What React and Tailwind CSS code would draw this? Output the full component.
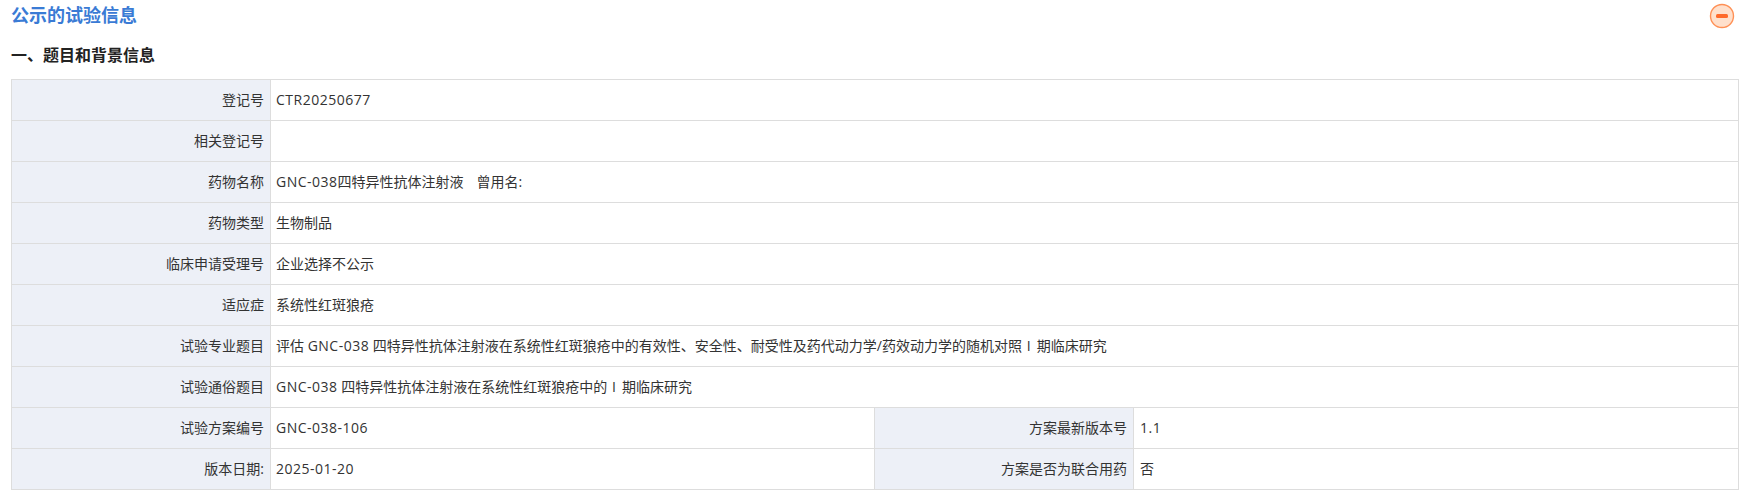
// # 公示的试验信息 #
const Label = ({ children }) => (
    <td className="border border-[#dddddd] bg-[#edf0f7] px-[6px] pb-[2px] text-right align-middle text-[14px] text-[#333333]">
        {children}
    </td>
);

const Value = ({ children, colSpan, right }) => (
    <td colSpan={colSpan} className={`border border-[#dddddd] bg-white pr-[6px] pb-[2px] text-left align-middle text-[14px] text-[#333333] ${right ? "pl-[6px]" : "pl-[5px]"}`}>
        {children}
    </td>
);

// latin runs are a bit wider in the reference
const Latin = ({ children }) => <span className="tracking-[0.5px]">{children}</span>;

// the roman numeral sits in a slightly wider gap
const Phase = () => <span className="tracking-[1.2px]"> I </span>;

const App = () => {
    return (
        <div className="h-[495px] overflow-hidden bg-white pl-[11px] pr-[9px] font-['Open_Sans','Noto_Sans_CJK_SC',sans-serif]">

            {/* # Header # */}
            <div className="flex h-[32px] items-center justify-between">
                <h2 className="pb-[2px] text-[18px] font-bold text-[#3a7bd5]">公示的试验信息</h2>
                <svg width="26" height="26" viewBox="0 0 26 26" className="mr-[4px]">
                    <circle cx="13" cy="13" r="11.5" fill="#ffe0cc" stroke="#ff9055" strokeWidth="1.4" />
                    <rect x="7" y="11" width="12" height="4" rx="1.5" fill="#ff6a2b" />
                </svg>
            </div>

            <h3 className="mt-[12px] h-[35px] text-[16px] font-bold leading-[22px] text-[#222222]">一、题目和背景信息</h3>

            {/* # Info Table # */}
            <table className="w-[1728px] table-fixed border-collapse">
                <colgroup>
                    <col className="w-[259px]" />
                    <col className="w-[604px]" />
                    <col className="w-[259px]" />
                    <col />
                </colgroup>
                <tbody className="[&>tr]:h-[41px]">
                    <tr><Label>登记号</Label><Value colSpan={3}><Latin>CTR20250677</Latin></Value></tr>
                    <tr><Label>相关登记号</Label><Value colSpan={3}></Value></tr>
                    <tr><Label>药物名称</Label><Value colSpan={3}><Latin>GNC-038</Latin>四特异性抗体注射液 <span className="tracking-[1px]">&nbsp; </span>曾用名:</Value></tr>
                    <tr><Label>药物类型</Label><Value colSpan={3}>生物制品</Value></tr>
                    <tr><Label>临床申请受理号</Label><Value colSpan={3}>企业选择不公示</Value></tr>
                    <tr><Label>适应症</Label><Value colSpan={3}>系统性红斑狼疮</Value></tr>
                    <tr><Label>试验专业题目</Label><Value colSpan={3}>评估 <Latin>GNC-038</Latin> 四特异性抗体注射液在系统性红斑狼疮中的有效性、安全性、耐受性及药代动力学/药效动力学的随机对照<Phase />期临床研究</Value></tr>
                    <tr><Label>试验通俗题目</Label><Value colSpan={3}><Latin>GNC-038</Latin> 四特异性抗体注射液在系统性红斑狼疮中的<Phase />期临床研究</Value></tr>
                    <tr><Label>试验方案编号</Label><Value><Latin>GNC-038-106</Latin></Value><Label>方案最新版本号</Label><Value right><Latin>1.1</Latin></Value></tr>
                    <tr><Label>版本日期:</Label><Value><Latin>2025-01-20</Latin></Value><Label>方案是否为联合用药</Label><Value right>否</Value></tr>
                </tbody>
            </table>
        </div>
    );
};

export default App;
